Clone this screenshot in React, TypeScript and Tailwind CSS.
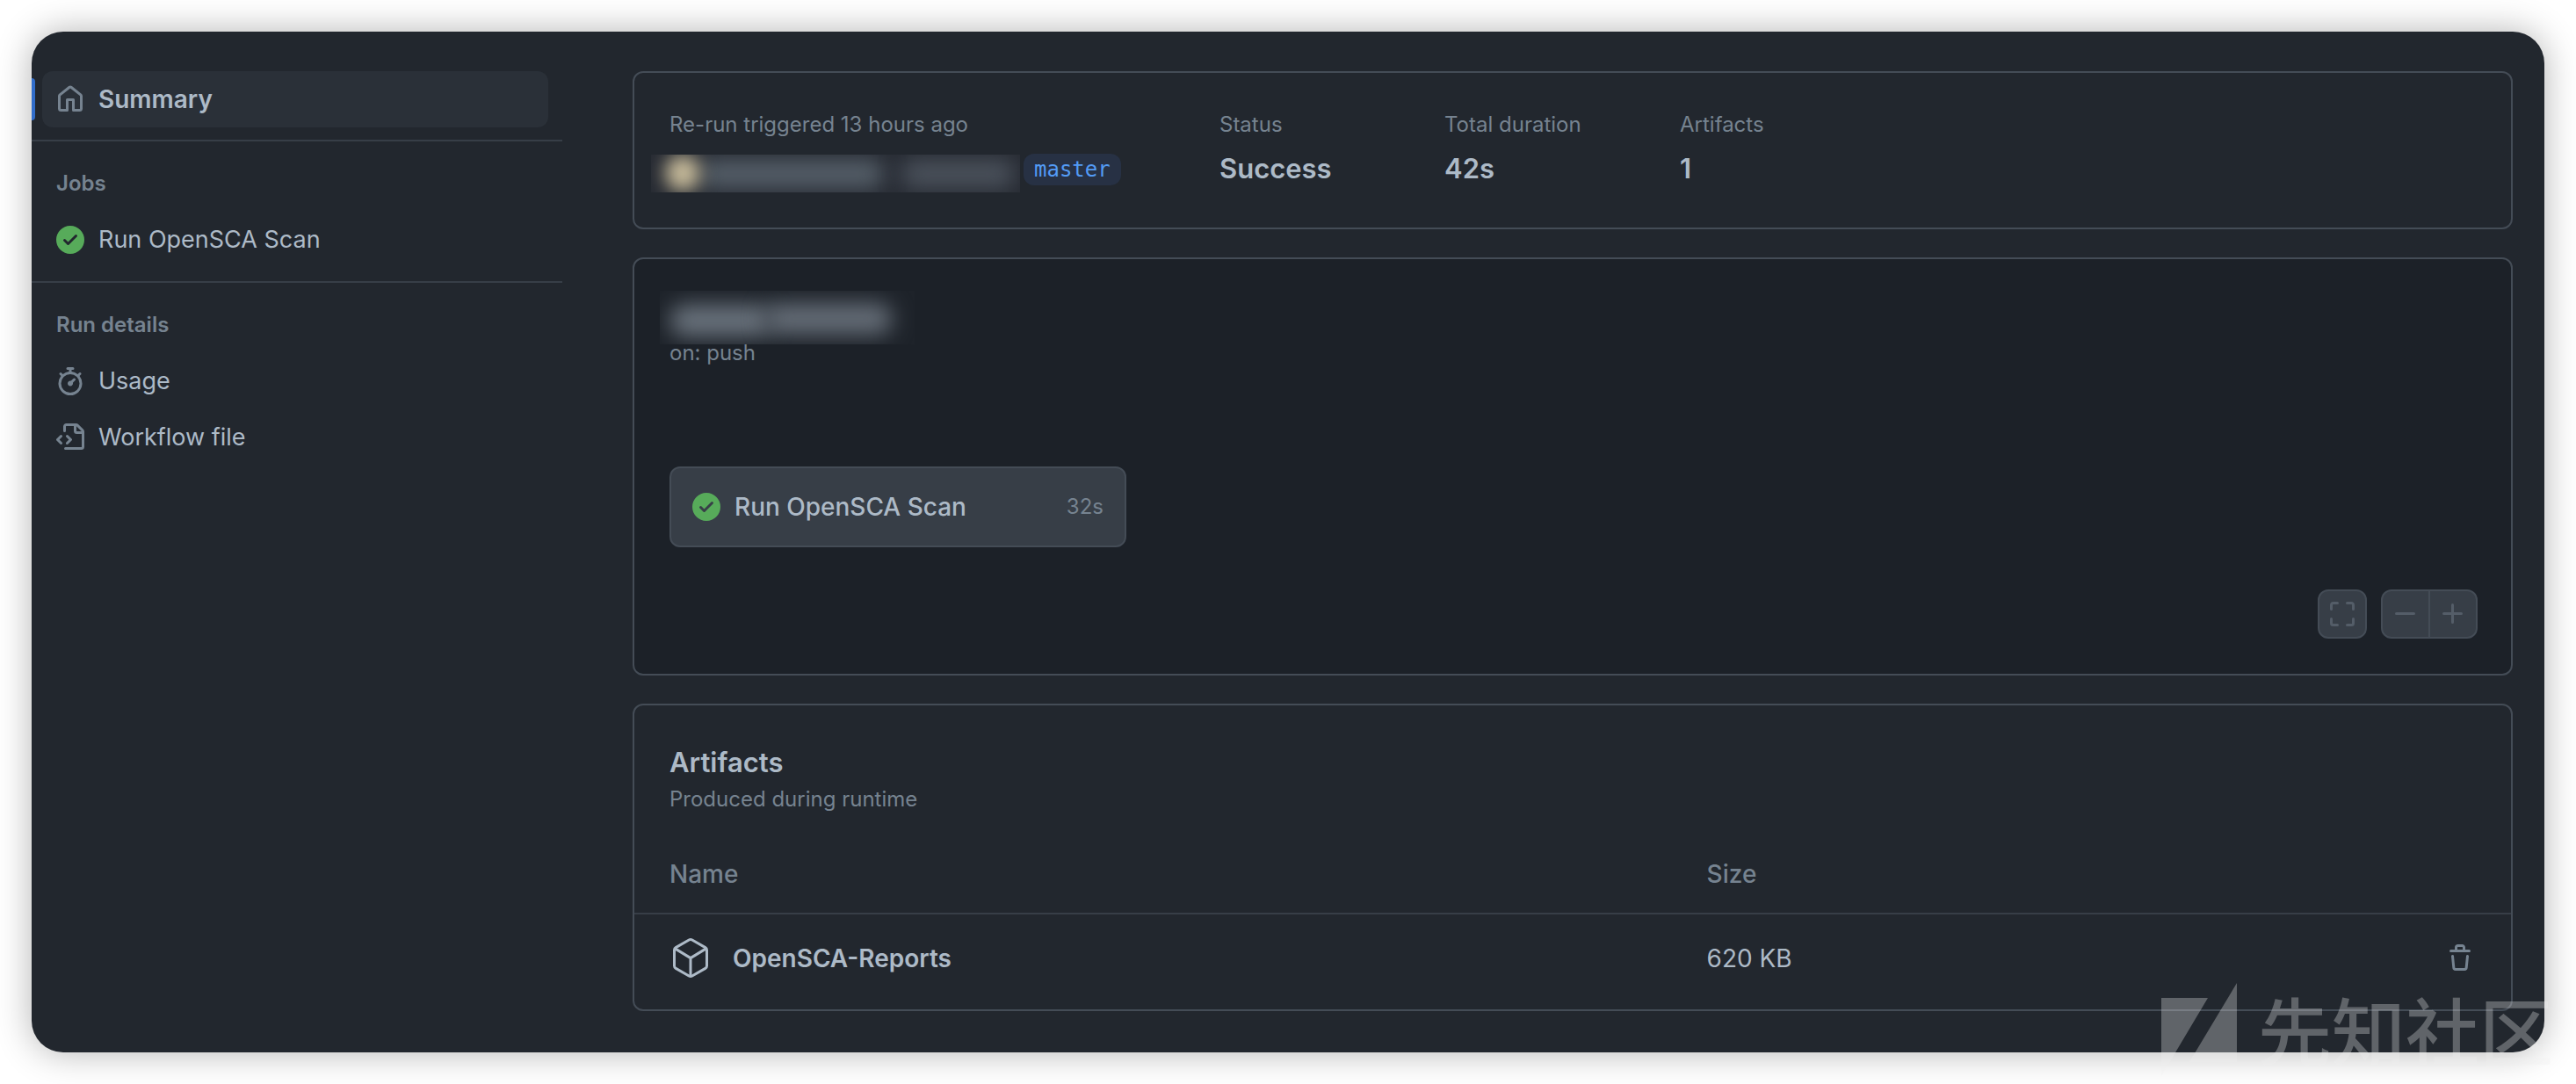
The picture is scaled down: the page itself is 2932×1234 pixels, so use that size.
import type { ReactNode } from "react";

type IconProps = { path: string; className?: string };

function Icon({ path, className = "" }: IconProps) {
  return (
    <svg viewBox="0 0 16 16" className={`size-8 shrink-0 ${className}`} fill="currentColor" aria-hidden="true">
      <path d={path} />
    </svg>
  );
}

const HOME =
  "M6.906.664a1.749 1.749 0 0 1 2.187 0l5.25 4.2c.415.332.657.835.657 1.367v7.019A1.75 1.75 0 0 1 13.25 15h-3.5a.75.75 0 0 1-.75-.75V9H7v5.25a.75.75 0 0 1-.75.75h-3.5A1.75 1.75 0 0 1 1 13.25V6.23c0-.531.242-1.034.657-1.366l5.25-4.2Zm1.25 1.171a.25.25 0 0 0-.312 0l-5.25 4.2a.25.25 0 0 0-.094.196v7.019c0 .138.112.25.25.25H5.5V8.25a.75.75 0 0 1 .75-.75h3.5a.75.75 0 0 1 .75.75v5.25h2.75a.25.25 0 0 0 .25-.25V6.23a.25.25 0 0 0-.094-.195Z";
const CHECK =
  "M8 16A8 8 0 1 1 8 0a8 8 0 0 1 0 16Zm3.78-9.72a.751.751 0 0 0-.018-1.042.751.751 0 0 0-1.042-.018L6.75 9.19 5.28 7.72a.751.751 0 0 0-1.042.018.751.751 0 0 0-.018 1.042l2 2a.75.75 0 0 0 1.06 0Z";
const STOPWATCH =
  "M5.75.75A.75.75 0 0 1 6.5 0h3a.75.75 0 0 1 0 1.5h-.75v1l-.001.041a6.724 6.724 0 0 1 3.464 1.435l.007-.006.75-.75a.749.749 0 0 1 1.275.326.749.749 0 0 1-.215.734l-.75.75-.006.007a6.75 6.75 0 1 1-10.548 0L2.72 5.03l-.75-.75a.751.751 0 0 1 .018-1.042.751.751 0 0 1 1.042-.018l.75.75.007.006A6.72 6.72 0 0 1 7.25 2.541V1.5H6.5a.75.75 0 0 1-.75-.75ZM8 14.5a5.25 5.25 0 1 0-.001-10.501A5.25 5.25 0 0 0 8 14.5Zm.389-6.7 1.33-1.33a.75.75 0 1 1 1.061 1.06L9.45 8.861A1.503 1.503 0 0 1 8 10.75a1.499 1.499 0 1 1 .389-2.95Z";
const FILE_CODE =
  "M4 1.75C4 .784 4.784 0 5.75 0h5.586c.464 0 .909.184 1.237.513l2.914 2.914c.329.328.513.773.513 1.237v8.586A1.75 1.75 0 0 1 14.25 15h-9a.75.75 0 0 1 0-1.5h9a.25.25 0 0 0 .25-.25V6h-2.75A1.75 1.75 0 0 1 10 4.25V1.5H5.75a.25.25 0 0 0-.25.25v2.5a.75.75 0 0 1-1.5 0Zm1.72 4.97a.75.75 0 0 1 1.06 0l2 2a.75.75 0 0 1 0 1.06l-2 2a.749.749 0 0 1-1.275-.326.749.749 0 0 1 .215-.734l1.47-1.47-1.47-1.47a.75.75 0 0 1 0-1.06ZM3.28 7.78 1.81 9.25l1.47 1.47a.751.751 0 0 1-.018 1.042.751.751 0 0 1-1.042.018l-2-2a.75.75 0 0 1 0-1.06l2-2a.751.751 0 0 1 1.042.018.751.751 0 0 1 .018 1.042Zm8.22-6.218V4.25c0 .138.112.25.25.25h2.688l-.011-.013-2.914-2.914-.013-.011Z";
const TRASH =
  "M11 1.75V3h2.25a.75.75 0 0 1 0 1.5H2.75a.75.75 0 0 1 0-1.5H5V1.75C5 .784 5.784 0 6.75 0h2.5C10.216 0 11 .784 11 1.75ZM4.496 6.675l.66 6.6a.25.25 0 0 0 .249.225h5.19a.25.25 0 0 0 .249-.225l.66-6.6a.75.75 0 0 1 1.492.149l-.66 6.6A1.748 1.748 0 0 1 10.595 15h-5.19a1.75 1.75 0 0 1-1.741-1.575l-.66-6.6a.75.75 0 1 1 1.492-.15ZM6.5 1.75V3h3V1.75a.25.25 0 0 0-.25-.25h-2.5a.25.25 0 0 0-.25.25Z";
const SCREEN_FULL =
  "M1.75 10a.75.75 0 0 1 .75.75v2.5c0 .138.112.25.25.25h2.5a.75.75 0 0 1 0 1.5h-2.5A1.75 1.75 0 0 1 1 13.25v-2.5a.75.75 0 0 1 .75-.75Zm12.5 0a.75.75 0 0 1 .75.75v2.5A1.75 1.75 0 0 1 13.25 15h-2.5a.75.75 0 0 1 0-1.5h2.5a.25.25 0 0 0 .25-.25v-2.5a.75.75 0 0 1 .75-.75ZM2.75 2.5a.25.25 0 0 0-.25.25v2.5a.75.75 0 0 1-1.5 0v-2.5C1 1.784 1.784 1 2.75 1h2.5a.75.75 0 0 1 0 1.5ZM10 1.75a.75.75 0 0 1 .75-.75h2.5c.966 0 1.75.784 1.75 1.75v2.5a.75.75 0 0 1-1.5 0v-2.5a.25.25 0 0 0-.25-.25h-2.5a.75.75 0 0 1-.75-.75Z";
const DASH = "M2 7.75A.75.75 0 0 1 2.75 7h10a.75.75 0 0 1 0 1.5h-10A.75.75 0 0 1 2 7.75Z";
const PLUS =
  "M7.75 2a.75.75 0 0 1 .75.75V7h4.25a.75.75 0 0 1 0 1.5H8.5v4.25a.75.75 0 0 1-1.5 0V8.5H2.75a.75.75 0 0 1 0-1.5H7V2.75A.75.75 0 0 1 7.75 2Z";

function NavItem({ path, tone = "text-[#768390]", children }: { path: string; tone?: string; children: ReactNode }) {
  return (
    <a href="#" className="ml-3 mr-4 flex h-16 items-center gap-4 rounded-xl px-4 text-[27px]">
      <Icon path={path} className={tone} />
      {children}
    </a>
  );
}

function NavHeading({ children }: { children: ReactNode }) {
  return <h2 className="flex h-16 items-center pl-7 text-2xl font-semibold text-[#768390]">{children}</h2>;
}

function Stat({ label, value, className = "" }: { label: string; value: string; className?: string }) {
  return (
    <div className={className}>
      <p className="text-2xl leading-9 text-[#768390]">{label}</p>
      <p className="mt-2 text-[31px] leading-12 font-semibold">{value}</p>
    </div>
  );
}

function Sidebar() {
  return (
    <nav className="w-[604px] shrink-0">
      <div className="relative">
        <span className="absolute top-2 left-0 h-12 w-1 rounded-r-md bg-[#316dca]" />
        <a
          href="#"
          aria-current="page"
          className="ml-3 mr-4 flex h-16 items-center gap-4 rounded-xl bg-[#2a3038] px-4 text-[28px] font-semibold"
        >
          <Icon path={HOME} className="text-[#768390]" />
          Summary
        </a>
      </div>
      <hr className="mt-3.5 mb-4 border-t-2 border-[#373e47]" />
      <NavHeading>Jobs</NavHeading>
      <NavItem path={CHECK} tone="text-[#57ab5a]">
        Run OpenSCA Scan
      </NavItem>
      <hr className="mt-[15px] mb-4 border-t-2 border-[#373e47]" />
      <NavHeading>Run details</NavHeading>
      <NavItem path={STOPWATCH}>Usage</NavItem>
      <NavItem path={FILE_CODE}>Workflow file</NavItem>
    </nav>
  );
}

function RunOverview() {
  return (
    <section className="flex rounded-xl border-2 border-[#444c56] px-10 pt-[41px] pb-10">
      <div className="w-[626px]">
        <p className="text-2xl leading-9 text-[#768390]">Re-run triggered 13 hours ago</p>
        <div className="mt-[15px] -ml-[21px] flex items-start gap-1">
          <div className="relative mt-px h-[43px] w-[420px] overflow-hidden bg-[#272b33]">
            <span className="absolute top-1.5 left-14 h-8 w-52 rounded-xl bg-[#56606a] blur-[12px]" />
            <span className="absolute top-1.5 left-[285px] h-8 w-32 rounded-xl bg-[#4b525c] blur-[12px]" />
            <span className="absolute top-0 left-4 h-[42px] w-10 rounded-full bg-[#c6ba9a] blur-[10px]" />
          </div>
          <a
            href="#"
            className="rounded-xl bg-[#273144] px-3 font-['DejaVu_Sans_Mono',monospace] text-2xl leading-9 text-[#539bf5]"
          >
            master
          </a>
        </div>
      </div>
      <Stat label="Status" value="Success" className="w-64" />
      <Stat label="Total duration" value="42s" className="w-[268px]" />
      <Stat label="Artifacts" value="1" />
    </section>
  );
}

function WorkflowGraph() {
  return (
    <section className="mt-8 rounded-xl border-2 border-[#444c56] bg-[#1c2128] pt-9 pr-[38px] pb-10 pl-10">
      <div className="relative -ml-[11px] h-[61px] w-[290px] overflow-hidden bg-[#1e232a]">
        <span className="absolute top-4 left-3 h-9 w-[115px] rounded-2xl bg-[#69727c] blur-[12px]" />
        <span className="absolute top-3.5 left-[119px] h-9 w-[145px] rounded-2xl bg-[#646c76] blur-[12px]" />
      </div>
      <p className="relative -mt-2 text-2xl leading-9 text-[#768390]">on: push</p>
      <a
        href="#"
        className="mt-[111px] flex h-[92px] w-[520px] items-center gap-4 rounded-xl border-2 border-[#444c56] bg-[#373e47] px-6 text-[28px] font-medium"
      >
        <Icon path={CHECK} className="text-[#57ab5a]" />
        Run OpenSCA Scan
        <span className="ml-auto text-2xl font-normal text-[#768390]">32s</span>
      </a>
      <div className="mt-12 flex justify-end gap-4 text-[#545d68]">
        <button
          aria-label="Full screen"
          className="flex size-14 items-center justify-center rounded-xl border-2 border-[#444c56] bg-[#373e47]"
        >
          <Icon path={SCREEN_FULL} />
        </button>
        <div className="flex h-14 divide-x-2 divide-[#444c56] rounded-xl border-2 border-[#444c56] bg-[#373e47]">
          <button aria-label="Zoom out" className="flex items-center px-[10px]">
            <Icon path={DASH} />
          </button>
          <button aria-label="Zoom in" className="flex items-center px-[10px]">
            <Icon path={PLUS} />
          </button>
        </div>
      </div>
    </section>
  );
}

function ArtifactList() {
  return (
    <section className="mt-8 rounded-xl border-2 border-[#444c56] pt-[41px]">
      <h2 className="px-10 text-[31px] leading-12 font-semibold">Artifacts</h2>
      <p className="px-10 text-2xl leading-9 text-[#768390]">Produced during runtime</p>
      <table className="w-full table-fixed border-collapse text-left text-[28px] leading-[42px]">
        <thead>
          <tr className="text-[#768390]">
            <th className="w-4/7 pt-[46px] pb-[23px] pl-10 font-medium">Name</th>
            <th className="pt-[46px] pb-[23px] font-medium">Size</th>
            <th className="w-40 pt-[46px] pb-[23px]" aria-label="Actions" />
          </tr>
        </thead>
        <tbody>
          <tr className="border-t-2 border-[#373e47]">
            <td className="pt-[26px] pb-[34px] pl-10">
              <a href="#" className="flex items-center gap-6 font-semibold">
                <svg
                  viewBox="0 0 24 24"
                  className="size-12 shrink-0"
                  fill="none"
                  stroke="currentColor"
                  strokeWidth="1.5"
                  strokeLinejoin="round"
                  aria-hidden="true"
                >
                  <path d="M12.9 1.5l7.5 4.3c.5.3.85.9.85 1.5v8.9c0 .6-.35 1.2-.85 1.5l-7.5 4.3a1.8 1.8 0 0 1-1.8 0l-7.5-4.3c-.5-.3-.85-.9-.85-1.5V7.3c0-.6.35-1.2.85-1.5l7.5-4.3a1.8 1.8 0 0 1 1.8 0Z" />
                  <path d="M3 6.3 12 11.8l9-5.5M12 11.8v10.4" />
                </svg>
                OpenSCA-Reports
              </a>
            </td>
            <td className="pt-[26px] pb-[34px]">620 KB</td>
            <td className="pt-[26px] pr-[42px] pb-[34px]">
              <button aria-label="Delete artifact" className="ml-auto block text-[#768390]">
                <Icon path={TRASH} />
              </button>
            </td>
          </tr>
        </tbody>
      </table>
    </section>
  );
}

function Watermark() {
  return (
    <div className="pointer-events-none absolute right-[26px] bottom-0 flex h-[115px] items-start gap-6 text-[#f0f0f0] opacity-30">
      <svg viewBox="0 0 86 108" className="h-[108px] w-[86px]" fill="currentColor" aria-hidden="true">
        <path d="M0 17h53L0 106ZM86 0v90H32Z" />
      </svg>
      <span className="font-['Noto_Sans_CJK_SC',sans-serif] text-[84px] leading-[104px] font-medium">先知社区</span>
    </div>
  );
}

export default function App() {
  return (
    <div className="relative min-h-screen overflow-hidden bg-white p-9 font-['Inter',sans-serif] text-[#adbac7]">
      <div className="flex gap-20 overflow-hidden rounded-[36px] bg-[#22272e] pt-[45px] pr-9 pb-[47px] shadow-[0_0_40px_rgba(0,0,0,0.3)]">
        <Sidebar />
        <main className="min-w-0 flex-1">
          <RunOverview />
          <WorkflowGraph />
          <ArtifactList />
        </main>
      </div>
      <Watermark />
    </div>
  );
}
